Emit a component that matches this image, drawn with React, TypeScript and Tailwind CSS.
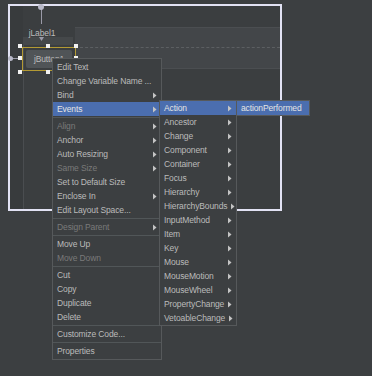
import React from 'react'

type Item = { label: string; sub?: boolean; disabled?: boolean; active?: boolean } | 'sep'

const mainItems: Item[] = [
  { label: 'Edit Text' },
  { label: 'Change Variable Name ...' },
  { label: 'Bind', sub: true },
  { label: 'Events', sub: true, active: true },
  'sep',
  { label: 'Align', sub: true, disabled: true },
  { label: 'Anchor', sub: true },
  { label: 'Auto Resizing', sub: true },
  { label: 'Same Size', sub: true, disabled: true },
  { label: 'Set to Default Size' },
  { label: 'Enclose In', sub: true },
  { label: 'Edit Layout Space...' },
  'sep',
  { label: 'Design Parent', sub: true, disabled: true },
  'sep',
  { label: 'Move Up' },
  { label: 'Move Down', disabled: true },
  'sep',
  { label: 'Cut' },
  { label: 'Copy' },
  { label: 'Duplicate' },
  { label: 'Delete' },
  'sep',
  { label: 'Customize Code...' },
  'sep',
  { label: 'Properties' },
]

const eventItems: Item[] = [
  { label: 'Action', sub: true, active: true },
  ...[
    'Ancestor',
    'Change',
    'Component',
    'Container',
    'Focus',
    'Hierarchy',
    'HierarchyBounds',
    'InputMethod',
    'Item',
    'Key',
    'Mouse',
    'MouseMotion',
    'MouseWheel',
    'PropertyChange',
    'VetoableChange',
  ].map((label) => ({ label, sub: true })),
]

function Arrow() {
  return (
    <svg width="4" height="7" viewBox="0 0 4 7" className="shrink-0">
      <path d="M0 0.5 L3.5 3.5 L0 6.5 Z" fill="#c4c4c4" />
    </svg>
  )
}

function Menu({ items, className }: { items: Item[]; className: string }) {
  return (
    <div className={`absolute flex flex-col border border-[#56595b] bg-[#3c3f41] ${className}`}>
      {items.map((item, i) =>
        item === 'sep' ? (
          <div key={i} className="my-px h-px bg-[#515658]" />
        ) : (
          <div
            key={i}
            className={`flex h-[14px] items-center justify-between gap-1 pl-1 pr-1 ${
              item.active ? 'bg-[#4b6eaf] text-[#e4e4e4]' : item.disabled ? 'text-[#7a7a7a]' : 'text-[#bbbbbb]'
            }`}
          >
            <span className="whitespace-nowrap">{item.label}</span>
            {item.sub && <Arrow />}
          </div>
        )
      )}
    </div>
  )
}

function Handle({ className }: { className: string }) {
  return <div className={`absolute h-[4px] w-[4px] bg-[#f2f2f2] ${className}`} />
}

export default function App() {
  return (
    <div className="relative h-[376px] w-[372px] overflow-hidden bg-[#3c3f41] pl-[8px] pt-[4px] font-['Liberation_Sans',Arial,sans-serif] text-[8.5px] tracking-[-0.12px]">
      {/* form frame */}
      <div className="relative flex h-[207px] w-[274px] border-2 border-[#e2e2f4] bg-[#3b3e40]">
        <div className="w-[13px] shrink-0 bg-[#383b3d]" />
        <div className="flex-1 pt-[39px]">
          <div className="h-full w-px bg-[#4a4d50]" />
        </div>

        {/* panel band */}
        <div className="absolute left-[65px] right-0 top-[21px] h-[42px] border-y border-[#4b4e51] bg-[#434649]">
          <div className="mt-[19px] border-t border-dashed border-[#5c5f62]" />
        </div>

        {/* jLabel1 */}
        <div className="absolute left-[31px] top-[-2px] h-[20px] w-px bg-[#9a9aa8]" />
        <div className="absolute left-[28px] top-[-2px] h-[6px] w-[6px] rounded-full bg-[#b8b8c8]" />
        <div className="absolute left-[13px] top-[31px] h-[8px] w-[50px] bg-[#45484a]" />
        <div className="absolute left-[17px] top-[21px] w-[30px] text-center text-[#bbbbbb]">jLabel1</div>
        <svg width="5" height="4" viewBox="0 0 5 4" className="absolute left-[29px] top-[31px]">
          <path d="M0 0 L5 0 L2.5 4 Z" fill="#9a9aa8" />
        </svg>

        {/* left anchor */}
        <div className="absolute left-0 top-[52px] h-px w-[10px] bg-[#9a9aa8]" />
        <div className="absolute left-[-2px] top-[50px] h-[5px] w-[5px] rounded-full bg-[#b8b8c8]" />

        {/* jButton1 selected */}
        <div className="absolute left-[12px] top-[41px] flex h-[24px] w-[54px] items-center justify-center border border-[#b39a34]">
          <div className="flex h-[18px] w-[46px] items-center justify-center rounded-[2px] bg-[#505457] text-[#bbbbbb]">
            jButton1
          </div>
        </div>
        <Handle className="left-[8px] top-[38px]" />
        <Handle className="left-[36px] top-[38px]" />
        <Handle className="left-[64px] top-[38px]" />
        <Handle className="left-[8px] top-[50px]" />
        <Handle className="left-[64px] top-[50px]" />
        <Handle className="left-[8px] top-[64px]" />
        <Handle className="left-[36px] top-[64px]" />
      </div>

      {/* context menu */}
      <Menu items={mainItems} className="left-[52px] top-[58px] w-[110px] py-px" />
      <Menu items={eventItems} className="left-[159px] top-[100px] w-[78px]" />
      <Menu items={[{ label: 'actionPerformed', active: true }]} className="left-[236px] top-[100px] w-[74px]" />
    </div>
  )
}
